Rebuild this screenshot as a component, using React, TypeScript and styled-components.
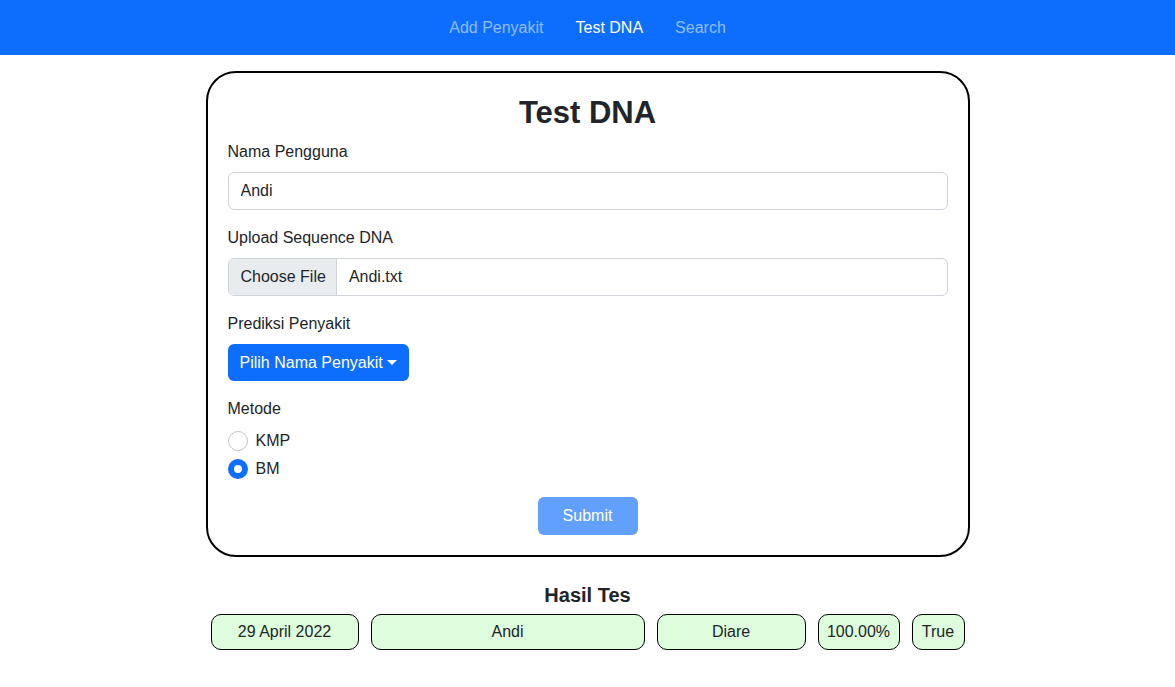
import React from "react";
import styled, { createGlobalStyle } from "styled-components";

const GlobalStyle = createGlobalStyle`
  * {
    box-sizing: border-box;
  }
  body {
    margin: 0;
    background: #fff;
    color: #212529;
    font-family: "Liberation Sans", Arial, sans-serif;
    font-size: 16px;
    line-height: 1.5;
  }
`;

const Navbar = styled.nav`
  height: 55px;
  background: #0d6efd;
  display: flex;
  align-items: center;
  justify-content: center;
  gap: 32px;
`;

const NavLink = styled.a<{ $active?: boolean }>`
  color: ${(p) => (p.$active ? "#fff" : "rgba(255, 255, 255, 0.55)")};
  text-decoration: none;
  font-size: 16px;
  line-height: 24px;
  cursor: pointer;
`;

const Page = styled.main`
  width: 764px;
  margin: 16px auto 0;
`;

const Card = styled.form`
  border: 2px solid #000;
  border-radius: 30px;
  padding: 20px;
  display: flex;
  flex-direction: column;
`;

const Title = styled.h1`
  margin: 0 0 7px;
  text-align: center;
  font-size: 31px;
  font-weight: 700;
  line-height: 40px;
`;

const Field = styled.div`
  margin-bottom: 16px;
  display: flex;
  flex-direction: column;
  align-items: flex-start;
`;

const Label = styled.label`
  display: block;
  margin-bottom: 8px;
  line-height: 24px;
`;

const TextInput = styled.input`
  width: 100%;
  height: 38px;
  padding: 6px 12px;
  border: 1px solid #ced4da;
  border-radius: 6px;
  font: inherit;
  color: #212529;
`;

const FileBox = styled.div`
  width: 100%;
  height: 38px;
  display: flex;
  border: 1px solid #ced4da;
  border-radius: 6px;
  overflow: hidden;
`;

const FileButton = styled.span`
  display: flex;
  align-items: center;
  padding: 0 10px 0 12px;
  background: #e9ecef;
  border-right: 1px solid #ced4da;
`;

const FileName = styled.span`
  display: flex;
  align-items: center;
  padding: 0 12px;
`;

const DropdownButton = styled.button`
  height: 37px;
  padding: 0 12px;
  border: none;
  border-radius: 6px;
  background: #0d6efd;
  color: #fff;
  font: inherit;
  display: flex;
  align-items: center;
  cursor: pointer;

  &::after {
    content: "";
    margin-left: 4px;
    border-top: 5px solid #fff;
    border-left: 5px solid transparent;
    border-right: 5px solid transparent;
  }
`;

const RadioRow = styled.label`
  display: flex;
  align-items: center;
  gap: 8px;
  line-height: 24px;
  margin-bottom: 4px;
`;

const Radio = styled.span<{ $checked?: boolean }>`
  width: 20px;
  height: 20px;
  border-radius: 50%;
  background: #fff;
  border: ${(p) => (p.$checked ? "6px solid #0d6efd" : "1px solid #c4c4c4")};
`;

const SubmitButton = styled.button`
  align-self: center;
  margin-top: 12px;
  width: 100px;
  height: 38px;
  border: none;
  border-radius: 6px;
  background: #62a0fe;
  color: #fff;
  font: inherit;
`;

const ResultTitle = styled.h2`
  margin: 24px 0 5px;
  text-align: center;
  font-size: 20px;
  font-weight: 700;
  line-height: 28px;
`;

const ResultRow = styled.div`
  display: flex;
  justify-content: center;
  gap: 12px;
`;

const ResultCell = styled.div<{ $width: number }>`
  width: ${(p) => p.$width}px;
  height: 36px;
  display: flex;
  align-items: center;
  justify-content: center;
  background: #ddfddd;
  border: 1px solid #000;
  border-radius: 10px;
  white-space: nowrap;
`;

const results = [
  { text: "29 April 2022", width: 148 },
  { text: "Andi", width: 274 },
  { text: "Diare", width: 149 },
  { text: "100.00%", width: 82 },
  { text: "True", width: 53 },
];

export default function App() {
  return (
    <>
      <GlobalStyle />
      <Navbar>
        <NavLink>Add Penyakit</NavLink>
        <NavLink $active>Test DNA</NavLink>
        <NavLink>Search</NavLink>
      </Navbar>
      <Page>
        <Card onSubmit={(e) => e.preventDefault()}>
          <Title>Test DNA</Title>
          <Field>
            <Label>Nama Pengguna</Label>
            <TextInput defaultValue="Andi" />
          </Field>
          <Field>
            <Label>Upload Sequence DNA</Label>
            <FileBox>
              <FileButton>Choose File</FileButton>
              <FileName>Andi.txt</FileName>
            </FileBox>
          </Field>
          <Field>
            <Label>Prediksi Penyakit</Label>
            <DropdownButton type="button">Pilih Nama Penyakit</DropdownButton>
          </Field>
          <Label>Metode</Label>
          <RadioRow>
            <Radio />
            KMP
          </RadioRow>
          <RadioRow>
            <Radio $checked />
            BM
          </RadioRow>
          <SubmitButton type="submit" disabled>
            Submit
          </SubmitButton>
        </Card>
        <ResultTitle>Hasil Tes</ResultTitle>
        <ResultRow>
          {results.map((r) => (
            <ResultCell key={r.text} $width={r.width}>
              {r.text}
            </ResultCell>
          ))}
        </ResultRow>
      </Page>
    </>
  );
}
